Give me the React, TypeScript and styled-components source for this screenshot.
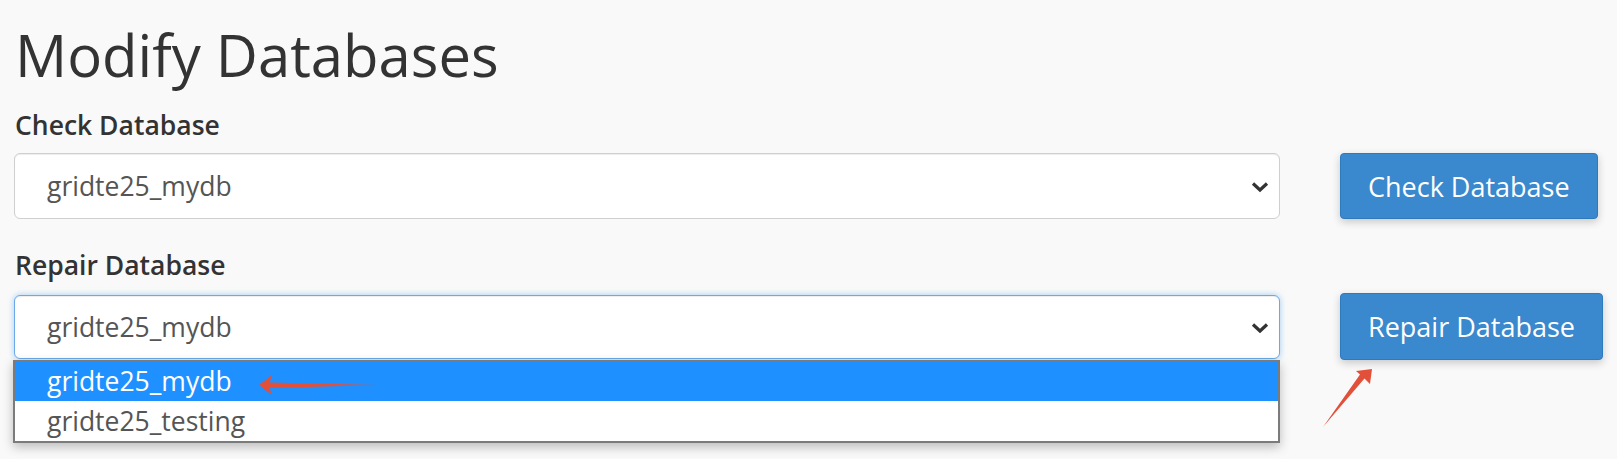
import React from "react";
import styled, { createGlobalStyle } from "styled-components";

const Global = createGlobalStyle`
  html, body { margin: 0; padding: 0; background: #f9f9f9; }
  body { font-family: "Open Sans", "Liberation Sans", sans-serif; color: #333; }
`;

const Page = styled.div`
  position: relative;
  width: 1617px;
  height: 459px;
  box-sizing: border-box;
  padding: 13px 0 0 14px;
  overflow: hidden;
`;

const Title = styled.h1`
  margin: 0 0 0 1px;
  font-size: 58px;
  font-weight: 400;
  line-height: 84px;
  color: #333;
`;

const Section = styled.div<{ $mt: number }>`
  display: flex;
  flex-direction: column;
  margin-top: ${(p) => p.$mt}px;
`;

const Label = styled.div`
  margin-left: 1px;
  font-size: 26.5px;
  font-weight: 600;
  line-height: 32px;
  color: #333;
`;

const Row = styled.div`
  display: grid;
  grid-template-columns: 1fr 277px;
  column-gap: 60px;
  align-items: center;
  margin-top: 12px;
`;

const SelectWrap = styled.div`
  position: relative;
`;

const Select = styled.div<{ $focused?: boolean }>`
  display: flex;
  align-items: center;
  justify-content: space-between;
  height: ${(p) => (p.$focused ? 64 : 66)}px;
  box-sizing: border-box;
  padding: 0 9px 0 32px;
  background: #fff;
  border: 1px solid ${(p) => (p.$focused ? "#6aaaea" : "#cfcfcf")};
  border-radius: 6px;
  box-shadow: ${(p) =>
    p.$focused
      ? "inset 0 1px 1px rgba(0,0,0,0.075), 0 0 6px rgba(102,175,233,0.6)"
      : "inset 0 1px 1px rgba(0,0,0,0.075)"};
  font-size: 26.5px;
  color: #555;
`;

const Chevron = styled.svg`
  width: 20px;
  height: 12px;
  margin-top: 2px;
`;

const Button = styled.button<{ $h: number }>`
  justify-self: start;
  height: ${(p) => p.$h}px;
  padding: 0 27px;
  background: #3a88cd;
  color: #fff;
  border: 1px solid #2f79bd;
  border-radius: 4px;
  font-family: "Open Sans", "Liberation Sans", sans-serif;
  font-size: 27px;
  font-weight: 400;
  box-shadow: 0 3px 8px rgba(0, 0, 0, 0.2);
  white-space: nowrap;
`;

const DropList = styled.div`
  position: absolute;
  left: -1px;
  right: 0;
  top: 65px;
  background: #fff;
  border: 2px solid #7b7b7b;
  border-top-width: 1px;
  box-shadow: 0 4px 10px rgba(0, 0, 0, 0.25);
  z-index: 2;
`;

const Option = styled.div<{ $active?: boolean }>`
  height: 40px;
  line-height: 40px;
  padding-left: 32px;
  font-size: 26.5px;
  color: ${(p) => (p.$active ? "#fff" : "#555")};
  background: ${(p) => (p.$active ? "#1e90ff" : "#fff")};
`;

const Annotation = styled.svg`
  position: absolute;
  left: 0;
  top: 0;
  pointer-events: none;
  z-index: 5;
`;

const ChevronIcon = () => (
  <Chevron viewBox="0 0 20 12">
    <path d="M3 2.5 L10 9 L17 2.5" fill="none" stroke="#333" strokeWidth="3.2" />
  </Chevron>
);

export default function App() {
  return (
    <Page>
      <Global />
      <Title>Modify Databases</Title>
      <Section $mt={12}>
        <Label>Check Database</Label>
        <Row>
          <SelectWrap>
            <Select>
              <span>gridte25_mydb</span>
              <ChevronIcon />
            </Select>
          </SelectWrap>
          <Button $h={66}>Check Database</Button>
        </Row>
      </Section>
      <Section $mt={30}>
        <Label>Repair Database</Label>
        <Row>
          <SelectWrap>
            <Select $focused>
              <span>gridte25_mydb</span>
              <ChevronIcon />
            </Select>
            <DropList>
              <Option $active>gridte25_mydb</Option>
              <Option>gridte25_testing</Option>
            </DropList>
          </SelectWrap>
          <Button $h={67}>Repair Database</Button>
        </Row>
      </Section>
      <Annotation width="1617" height="459" viewBox="0 0 1617 459">
        <defs>
          <linearGradient id="fade1" x1="260" y1="0" x2="378" y2="0" gradientUnits="userSpaceOnUse">
            <stop offset="0" stopColor="#e2503a" />
            <stop offset="0.7" stopColor="#e2503a" />
            <stop offset="1" stopColor="#e2503a" stopOpacity="0.6" />
          </linearGradient>
        </defs>
        <polygon
          points="259,385 272,375 269.5,382.5 378,385 269.5,388 272,395"
          fill="url(#fade1)"
        />
        <polygon
          points="1372,369 1370,384 1364.5,378.5 1323,427 1360,374.5 1356,371"
          fill="#e2503a"
        />
      </Annotation>
    </Page>
  );
}
